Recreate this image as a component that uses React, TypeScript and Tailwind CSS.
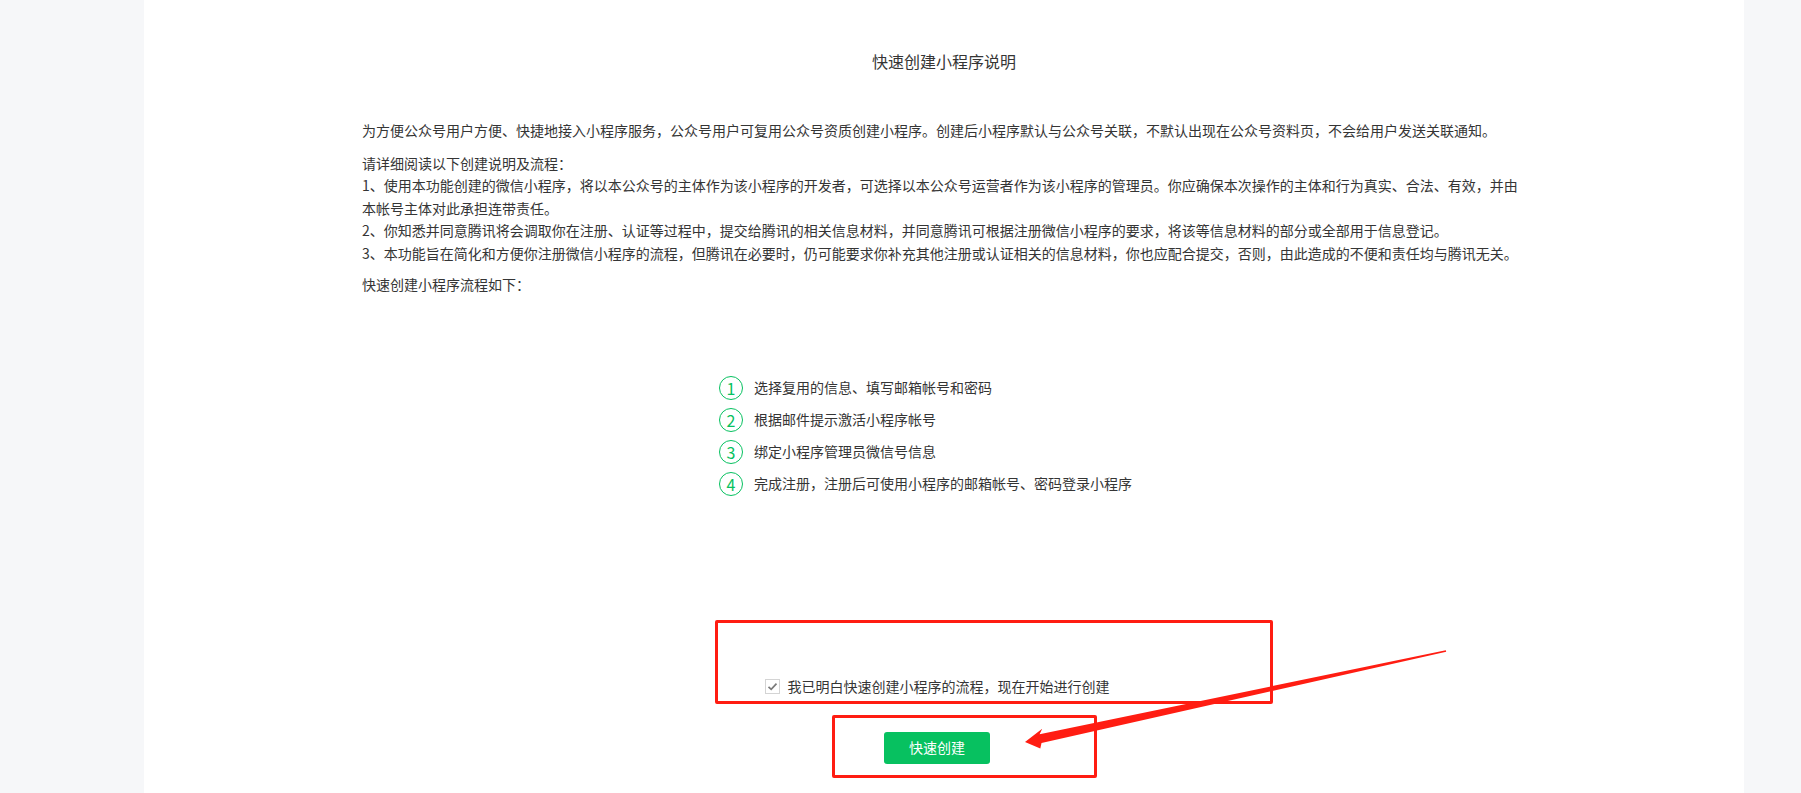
import React from 'react'

const steps = [
  '选择复用的信息、填写邮箱帐号和密码',
  '根据邮件提示激活小程序帐号',
  '绑定小程序管理员微信号信息',
  '完成注册，注册后可使用小程序的邮箱帐号、密码登录小程序',
]

const rules = [
  '1、使用本功能创建的微信小程序，将以本公众号的主体作为该小程序的开发者，可选择以本公众号运营者作为该小程序的管理员。你应确保本次操作的主体和行为真实、合法、有效，并由本帐号主体对此承担连带责任。',
  '2、你知悉并同意腾讯将会调取你在注册、认证等过程中，提交给腾讯的相关信息材料，并同意腾讯可根据注册微信小程序的要求，将该等信息材料的部分或全部用于信息登记。',
  '3、本功能旨在简化和方便你注册微信小程序的流程，但腾讯在必要时，仍可能要求你补充其他注册或认证相关的信息材料，你也应配合提交，否则，由此造成的不便和责任均与腾讯无关。',
]

function StepItem({ index, text }: { index: number; text: string }) {
  return (
    <li className="flex items-center h-[24px]">
      <span className="flex items-center justify-center w-[24px] h-[24px] rounded-full border-[1.5px] border-[#07c160] text-[#07c160] text-[16px] leading-none">
        {index}
      </span>
      <span className="ml-[11px] text-[14px] text-[#353535]">{text}</span>
    </li>
  )
}

function CheckBox() {
  return (
    <span className="flex items-center justify-center w-[15px] h-[15px] border border-[#d4d4d4] bg-white">
      <svg width="11" height="11" viewBox="0 0 11 11" fill="none">
        <path d="M1.5 5.8 L4.2 8.3 L9.5 2.6" stroke="#7a7a7a" strokeWidth="1.7" />
      </svg>
    </span>
  )
}

// red annotation arrow pointing at the create button, tapering toward the tail
function PointerArrow() {
  return (
    <svg
      className="absolute left-0 top-0 pointer-events-none"
      width="1801"
      height="793"
      viewBox="0 0 1801 793"
    >
      <polygon
        fill="#ff1d12"
        points="1025,742 1040.3,748.6 1041.5,743.1 1446.2,651.8 1445.8,650.2 1039.6,734.3 1042.2,728.8"
      />
    </svg>
  )
}

export default function App() {
  return (
    <div
      className="relative flex h-[793px] w-full overflow-hidden bg-[#f6f7f9]"
      style={{ fontFamily: '"Noto Sans CJK SC", "Noto Sans", sans-serif' }}
    >
      <div className="w-[144px] shrink-0" />

      <main className="w-[1600px] shrink-0 bg-white px-[218px] pt-[49px]">
        <h1 className="text-center text-[16px] leading-[24px] font-normal text-[#353535]">
          快速创建小程序说明
        </h1>

        <div className="mt-[46px] text-[14px] leading-[22.5px] text-[#353535]">
          <p>
            为方便公众号用户方便、快捷地接入小程序服务，公众号用户可复用公众号资质创建小程序。创建后小程序默认与公众号关联，不默认出现在公众号资料页，不会给用户发送关联通知。
          </p>
          <div className="mt-[10px]">
            <p>请详细阅读以下创建说明及流程：</p>
            {rules.map((r) => (
              <p key={r}>{r}</p>
            ))}
          </div>
          <p className="mt-[9px]">快速创建小程序流程如下：</p>
        </div>

        <ol className="mx-auto mt-[80px] flex w-[450px] -translate-x-[6px] flex-col gap-[8px] pl-[6px]">
          {steps.map((s, i) => (
            <StepItem key={s} index={i + 1} text={s} />
          ))}
        </ol>

        <div className="mt-[180px] flex flex-col items-center pr-[14px]">
          <label className="flex h-[22px] items-center gap-[8px] text-[14px] text-[#353535]">
            <CheckBox />
            我已明白快速创建小程序的流程，现在开始进行创建
          </label>
          <button className="mt-[34px] h-[32px] w-[106px] rounded-[3px] bg-[#07c160] text-[14px] text-white">
            快速创建
          </button>
        </div>
      </main>

      <div className="flex-1" />

      {/* annotation overlays */}
      <div className="absolute left-[715px] top-[620px] h-[84px] w-[558px] rounded-[2px] border-[3px] border-[#ff1d12] pointer-events-none" />
      <div className="absolute left-[832px] top-[715px] h-[63px] w-[265px] rounded-[2px] border-[3px] border-[#ff1d12] pointer-events-none" />
      <PointerArrow />
    </div>
  )
}
